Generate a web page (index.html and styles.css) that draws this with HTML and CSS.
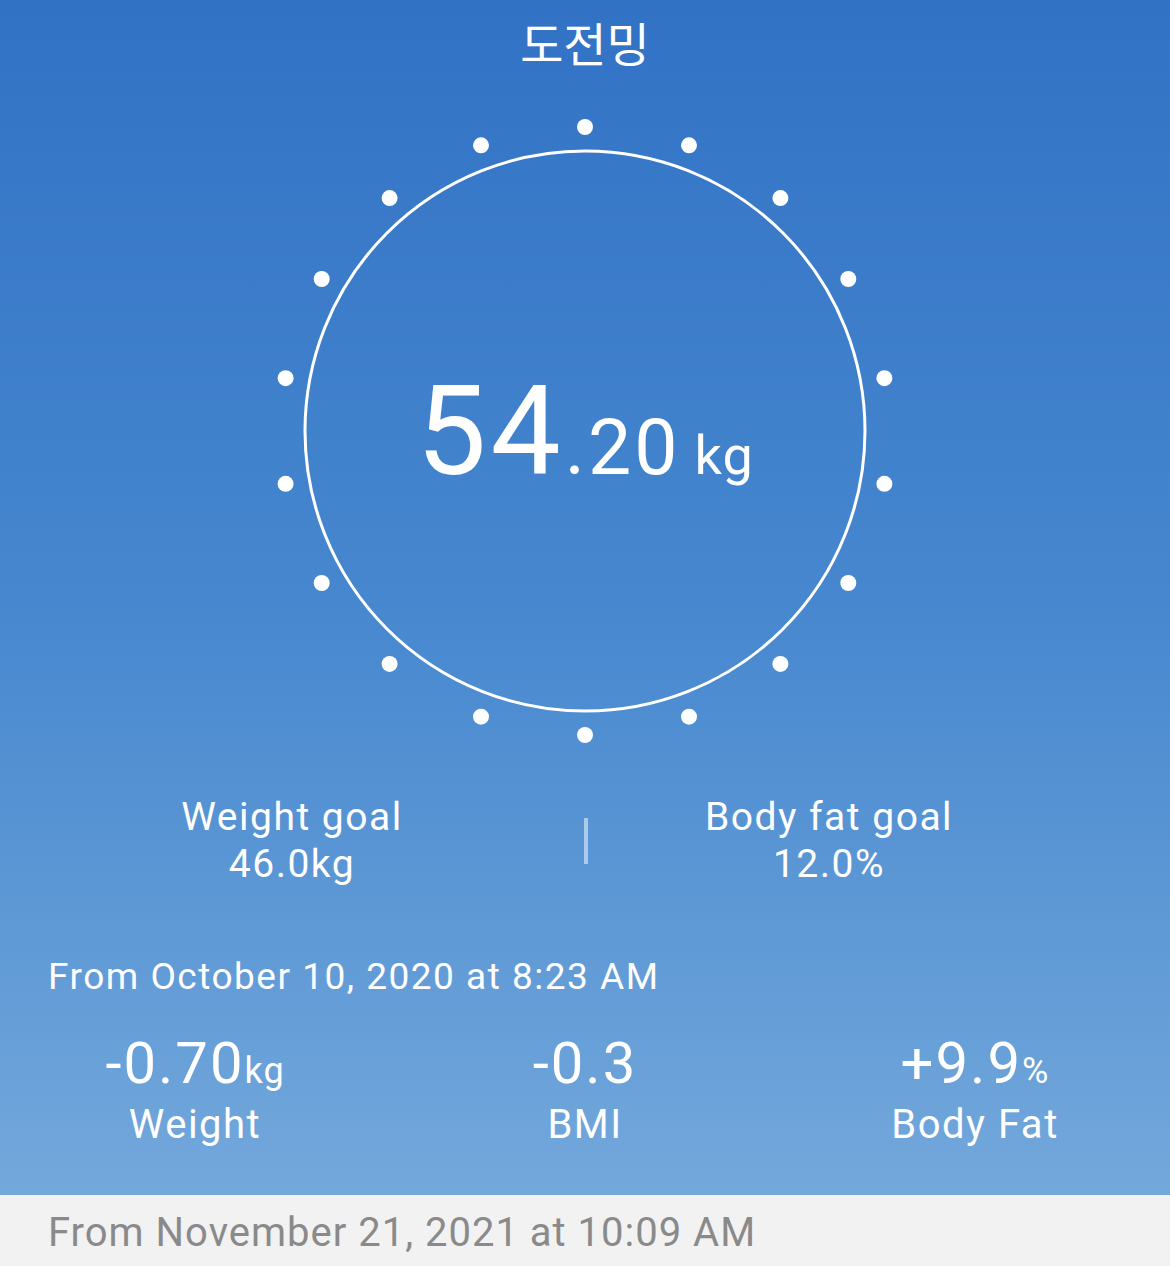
FILE: index.html
```html
<!DOCTYPE html>
<html lang="ko">
<head>
    <meta charset="UTF-8">
    <meta name="viewport" content="width=device-width, initial-scale=1.0">
    <title>도전밍</title>
    <link rel="stylesheet" href="styles.css">
</head>
<body>
    <div class="screen">
        <h1 class="title">도전밍</h1>

        <!-- Шкала с текущим весом -->
        <div class="gauge">
            <svg class="gauge-ring" viewBox="0 0 640 640" width="640" height="640">
                <circle cx="320" cy="320" r="280" fill="none" stroke="#fff" stroke-width="3"/>
                <g fill="#fff">
                    <circle cx="320" cy="16" r="8"/>
                    <circle cx="424" cy="34.3" r="8"/>
                    <circle cx="515.4" cy="87.1" r="8"/>
                    <circle cx="583.3" cy="168" r="8"/>
                    <circle cx="619.4" cy="267.2" r="8"/>
                    <circle cx="619.4" cy="372.8" r="8"/>
                    <circle cx="583.3" cy="472" r="8"/>
                    <circle cx="515.4" cy="552.9" r="8"/>
                    <circle cx="424" cy="605.7" r="8"/>
                    <circle cx="320" cy="624" r="8"/>
                    <circle cx="216" cy="605.7" r="8"/>
                    <circle cx="124.6" cy="552.9" r="8"/>
                    <circle cx="56.7" cy="472" r="8"/>
                    <circle cx="20.6" cy="372.8" r="8"/>
                    <circle cx="20.6" cy="267.2" r="8"/>
                    <circle cx="56.7" cy="168" r="8"/>
                    <circle cx="124.6" cy="87.1" r="8"/>
                    <circle cx="216" cy="34.3" r="8"/>
                </g>
            </svg>
            <div class="readout">
                <div class="readout-line"><span class="readout-int">54</span><span class="readout-dec">.20</span><span class="readout-unit">kg</span></div>
            </div>
        </div>

        <!-- Цели -->
        <div class="goals">
            <div class="goal">
                <div>Weight goal</div>
                <div>46.0kg</div>
            </div>
            <div class="goal-divider"></div>
            <div class="goal">
                <div>Body fat goal</div>
                <div>12.0%</div>
            </div>
        </div>

        <div class="since">From October 10, 2020 at 8:23 AM</div>

        <!-- Изменения -->
        <div class="stats">
            <div class="stat">
                <div class="stat-value">-0.70<small>kg</small></div>
                <div class="stat-label">Weight</div>
            </div>
            <div class="stat">
                <div class="stat-value">-0.3</div>
                <div class="stat-label">BMI</div>
            </div>
            <div class="stat">
                <div class="stat-value">+9.9<small>%</small></div>
                <div class="stat-label">Body Fat</div>
            </div>
        </div>
    </div>

    <div class="footer">From November 21, 2021 at 10:09 AM</div>
</body>
</html>
```

FILE: styles.css
```css
body {
    margin: 0;
    font-family: Roboto, "Noto Sans CJK KR", sans-serif;
    color: #fff;
    background-color: #f2f2f2;
}
.screen {
    height: 1195px;
    background: linear-gradient(to bottom, #3272c5 0%, #4687cf 50%, #73a8db 100%);
    overflow: hidden;
}
.title {
    margin: 0;
    height: 111px;
    padding-top: 12px;
    box-sizing: border-box;
    font-family: "Noto Sans CJK KR", sans-serif;
    font-size: 47px;
    font-weight: 400;
    line-height: 60px;
    text-align: center;
}
.gauge {
    position: relative;
    width: 640px;
    height: 640px;
    margin: 0 auto;
}
.gauge-ring {
    display: block;
}
.readout {
    position: absolute;
    inset: 0;
    display: flex;
    justify-content: center;
    align-items: center;
}
.readout-line {
    line-height: 125px;
    white-space: nowrap;
    margin-top: 38px;
}
.readout-int {
    font-size: 125px;
    letter-spacing: 4px;
}
.readout-dec {
    font-size: 77px;
    letter-spacing: 3px;
}
.readout-unit {
    font-size: 54px;
    margin-left: 14px;
    letter-spacing: 1px;
}
.goals {
    display: grid;
    grid-template-columns: 584px 4px 1fr;
    align-items: center;
    padding-right: 100px;
    margin-top: 43px;
}
.goal {
    text-align: center;
    font-size: 39px;
    line-height: 47px;
    letter-spacing: 1.5px;
}
.goal-divider {
    height: 46px;
    background-color: rgba(255, 255, 255, 0.5);
}
.since {
    margin-top: 67px;
    padding-left: 48px;
    font-size: 37px;
    line-height: 44px;
    letter-spacing: 1.5px;
}
.stats {
    display: grid;
    grid-template-columns: 1fr 1fr 1fr;
    margin-top: 34px;
    text-align: center;
}
.stat-value {
    font-size: 58px;
    line-height: 60px;
    letter-spacing: 2px;
}
.stat-value small {
    font-size: 36px;
    line-height: 1;
    letter-spacing: 1px;
}
.stat-label {
    font-size: 40px;
    line-height: 46px;
    margin-top: 9px;
    letter-spacing: 1.5px;
}
.footer {
    height: 71px;
    box-sizing: border-box;
    padding: 4px 0 0 48px;
    font-size: 40px;
    line-height: 67px;
    color: #8a8a8a;
    letter-spacing: 1px;
}
```
